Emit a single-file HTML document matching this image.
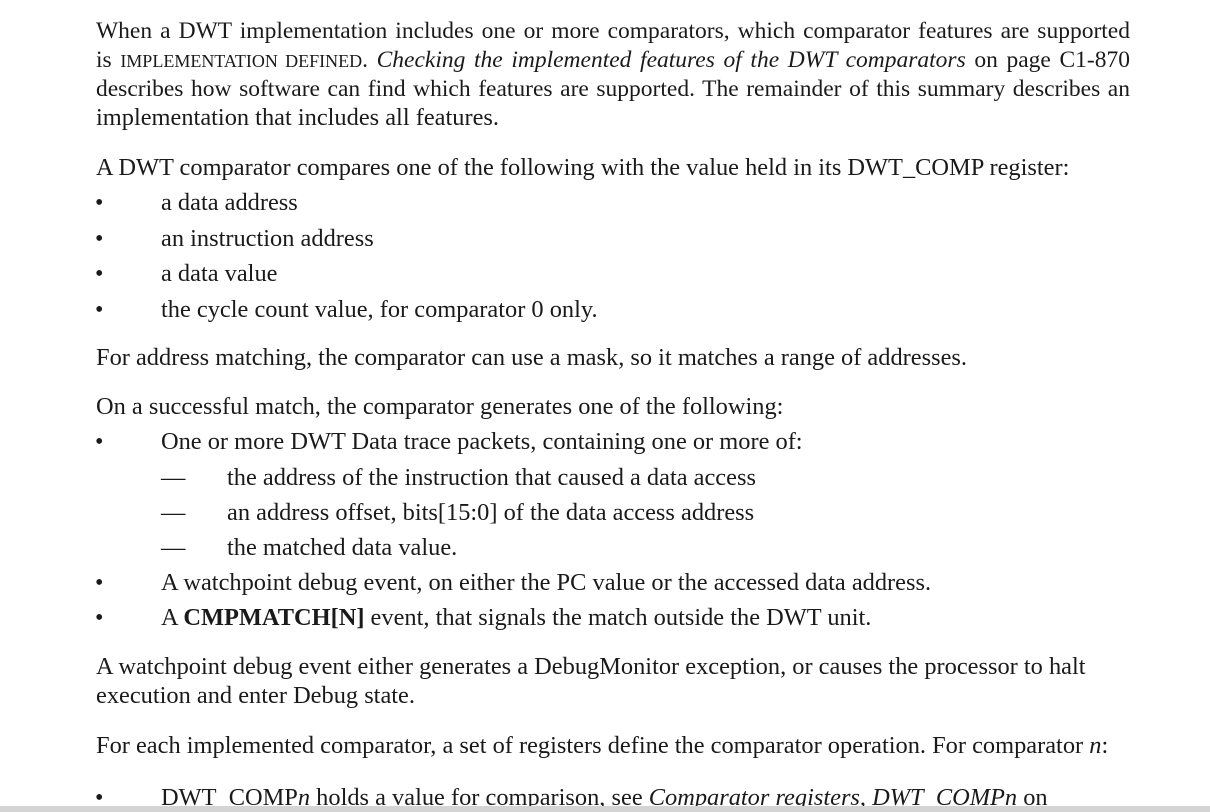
<!DOCTYPE html>
<html><head><meta charset="utf-8"><style>
body{margin:0;width:1210px;height:812px;background:#fff;position:relative;overflow:hidden;font-family:"Liberation Serif","Times New Roman",serif;font-size:24.4px;color:#1a1a1a}
.l{position:absolute;left:96px;line-height:26px;white-space:nowrap}
.j{width:1034px;text-align:justify;text-align-last:justify;white-space:normal;font-size:23.5px;height:26px;overflow:visible}
.b{position:absolute;left:95px;line-height:26px;font-size:24px}
.t{left:161px}
.d{left:227px}
.sc{font-size:18px}
.bar{position:absolute;left:0;top:806px;width:1210px;height:6px;background:#d4d4d4}
</style></head><body>
<div class="l j" style="top:18px">When a DWT implementation includes one or more comparators, which comparator features are supported</div>
<div class="l j" style="top:47px">is <span class="sc">IMPLEMENTATION DEFINED</span>. <i>Checking the implemented features of the DWT comparators</i> on page C1-870</div>
<div class="l j" style="top:76px">describes how software can find which features are supported. The remainder of this summary describes an</div>
<div class="l" style="top:105px">implementation that includes all features.</div>
<div class="l" style="top:155px">A DWT comparator compares one of the following with the value held in its DWT_COMP register:</div>
<div class="b" style="top:190px">•</div><div class="l t" style="top:190px">a data address</div>
<div class="b" style="top:226px">•</div><div class="l t" style="top:226px">an instruction address</div>
<div class="b" style="top:261px">•</div><div class="l t" style="top:261px">a data value</div>
<div class="b" style="top:297px">•</div><div class="l t" style="top:297px">the cycle count value, for comparator 0 only.</div>
<div class="l" style="top:345px">For address matching, the comparator can use a mask, so it matches a range of addresses.</div>
<div class="l" style="top:394px">On a successful match, the comparator generates one of the following:</div>
<div class="b" style="top:429px">•</div><div class="l t" style="top:429px">One or more DWT Data trace packets, containing one or more of:</div>
<div class="l t" style="top:465px">—</div><div class="l d" style="top:465px">the address of the instruction that caused a data access</div>
<div class="l t" style="top:500px">—</div><div class="l d" style="top:500px">an address offset, bits[15:0] of the data access address</div>
<div class="l t" style="top:535px">—</div><div class="l d" style="top:535px">the matched data value.</div>
<div class="b" style="top:570px">•</div><div class="l t" style="top:570px">A watchpoint debug event, on either the PC value or the accessed data address.</div>
<div class="b" style="top:605px">•</div><div class="l t" style="top:605px">A <b>CMPMATCH[N]</b> event, that signals the match outside the DWT unit.</div>
<div class="l" style="top:654px">A watchpoint debug event either generates a DebugMonitor exception, or causes the processor to halt</div>
<div class="l" style="top:683px">execution and enter Debug state.</div>
<div class="l" style="top:733px">For each implemented comparator, a set of registers define the comparator operation. For comparator <i>n</i>:</div>
<div class="b" style="top:785px">•</div><div class="l t" style="top:785px">DWT_COMP<i>n</i> holds a value for comparison, see <i>Comparator registers, DWT_COMPn</i> on</div>
<div class="bar"></div>
</body></html>
